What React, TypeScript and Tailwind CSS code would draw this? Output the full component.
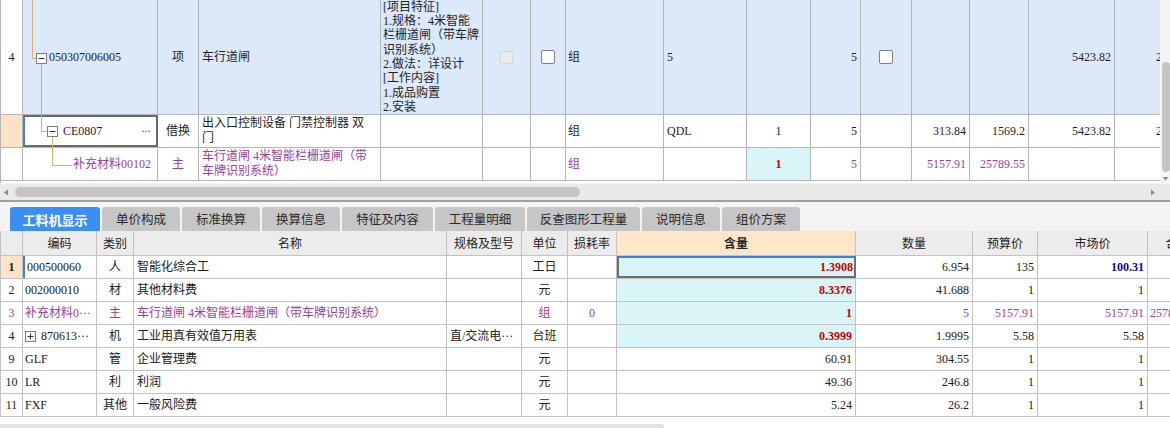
import React from "react";

type CP = { w: string; className?: string; children?: React.ReactNode };

function TC({ w, className = "", children }: CP) {
  return (
    <div
      className={`shrink-0 h-full flex items-center border-r border-[#b4b4b4] overflow-hidden whitespace-nowrap ${w} ${className}`}
    >
      {children}
    </div>
  );
}

function Check({ disabled }: { disabled?: boolean }) {
  return disabled ? (
    <div className="w-[13px] h-[13px] rounded-[2px] border border-[#d6d6d6] bg-[#ececec]" />
  ) : (
    <div className="w-[14px] h-[14px] rounded-[2px] border border-[#7f7f7f] bg-white" />
  );
}

function TopTable() {
  const blue = "bg-[#dce9fb]";
  const purple = "text-[#9c3d9c]";
  return (
    <div className="relative h-[183px] overflow-hidden bg-white border-l border-[#b4b4b4]">
      {/* row 1 */}
      <div className="flex h-[115px] border-b border-[#b4b4b4]">
        <TC w="w-[22px]" className="justify-center bg-white">4</TC>
        <TC w="w-[135px]" className={`${blue} pl-[26px]`}>050307006005</TC>
        <TC w="w-[41px]" className={`${blue} justify-center`}>项</TC>
        <TC w="w-[182px]" className={`${blue} pl-[3px]`}>车行道闸</TC>
        <TC w="w-[102px]" className={`${blue} pl-[2px]`}>
          <div className="flex flex-col leading-[14.3px]">
            <span>[项目特征]</span>
            <span>1.规格：4米智能</span>
            <span>栏栅道闸（带车牌</span>
            <span>识别系统）</span>
            <span>2.做法：详设计</span>
            <span>[工作内容]</span>
            <span>1.成品购置</span>
            <span>2.安装</span>
          </div>
        </TC>
        <TC w="w-[48px]" className={`${blue} justify-center`}><Check disabled /></TC>
        <TC w="w-[35px]" className={`${blue} justify-center`}><Check /></TC>
        <TC w="w-[98px]" className={`${blue} pl-[2px]`}>组</TC>
        <TC w="w-[83px]" className={`${blue} pl-[3px]`}>5</TC>
        <TC w="w-[64px]" className={blue}></TC>
        <TC w="w-[50px]" className={`${blue} justify-end pr-[3px]`}>5</TC>
        <TC w="w-[51px]" className={`${blue} justify-center`}><Check /></TC>
        <TC w="w-[58px]" className={blue}></TC>
        <TC w="w-[59px]" className={blue}></TC>
        <TC w="w-[86px]" className={`${blue} justify-end pr-[3px]`}>5423.82</TC>
        <TC w="w-[80px]" className={`${blue} pl-[41px]`}>27119.1</TC>
      </div>
      {/* row 2 */}
      <div className="flex h-[33px] border-b border-[#b4b4b4]">
        <TC w="w-[22px]" className="bg-[#fbe3c5]"></TC>
        <div className="shrink-0 w-[135px] h-full flex items-center border-2 border-[#6a6a6a] border-l-[#3d82e0] bg-white pl-[38px] pr-[6px] justify-between whitespace-nowrap">
          <span>CE0807</span>
          <span className="text-[#44587a] tracking-[-1px]">···</span>
        </div>
        <TC w="w-[41px]" className="justify-center">借换</TC>
        <TC w="w-[182px]" className="pl-[3px]">
          <div className="flex flex-col leading-[15px]">
            <span>出入口控制设备 门禁控制器 双</span>
            <span>门</span>
          </div>
        </TC>
        <TC w="w-[102px]"></TC>
        <TC w="w-[48px]"></TC>
        <TC w="w-[35px]"></TC>
        <TC w="w-[98px]" className="pl-[2px]">组</TC>
        <TC w="w-[83px]" className="pl-[3px]">QDL</TC>
        <TC w="w-[64px]" className="justify-center">1</TC>
        <TC w="w-[50px]" className="justify-end pr-[3px]">5</TC>
        <TC w="w-[51px]"></TC>
        <TC w="w-[58px]" className="justify-end pr-[3px]">313.84</TC>
        <TC w="w-[59px]" className="justify-end pr-[3px]">1569.2</TC>
        <TC w="w-[86px]" className="justify-end pr-[3px]">5423.82</TC>
        <TC w="w-[80px]" className="pl-[41px]">27119.1</TC>
      </div>
      {/* row 3 */}
      <div className={`flex h-[33px] border-b border-[#b4b4b4] ${purple}`}>
        <TC w="w-[22px]"></TC>
        <TC w="w-[135px]" className="pl-[50px]">补充材料00102</TC>
        <TC w="w-[41px]" className="justify-center">主</TC>
        <TC w="w-[182px]" className="pl-[3px]">
          <div className="flex flex-col leading-[15px]">
            <span>车行道闸 4米智能栏栅道闸（带</span>
            <span>车牌识别系统）</span>
          </div>
        </TC>
        <TC w="w-[102px]"></TC>
        <TC w="w-[48px]"></TC>
        <TC w="w-[35px]"></TC>
        <TC w="w-[98px]" className="pl-[2px]">组</TC>
        <TC w="w-[83px]"></TC>
        <TC w="w-[64px]" className="justify-center bg-[#d9f5f8] text-[#c40000] font-bold">1</TC>
        <TC w="w-[50px]" className="justify-end pr-[3px]">5</TC>
        <TC w="w-[51px]"></TC>
        <TC w="w-[58px]" className="justify-end pr-[3px]">5157.91</TC>
        <TC w="w-[59px]" className="justify-end pr-[3px]">25789.55</TC>
        <TC w="w-[86px]"></TC>
        <TC w="w-[80px]"></TC>
      </div>
      {/* tree lines */}
      <svg className="absolute left-0 top-0 pointer-events-none" width="160" height="181">
        <g stroke="#d8b06c" strokeWidth="1" fill="none">
          <path d="M31.5 0 V58.5 H35" />
          <path d="M40.5 63 V131.5 H46" />
          <path d="M51.5 136 V165.5 H71" />
        </g>
        <rect x="35.5" y="53.5" width="10" height="10" fill="#fff" stroke="#7c7c7c" />
        <path d="M37.5 58.5 H43.5" stroke="#333" />
        <rect x="46.5" y="126.5" width="10" height="10" fill="#fff" stroke="#7c7c7c" />
        <path d="M48.5 131.5 H54.5" stroke="#333" />
      </svg>
    </div>
  );
}

function HScroll() {
  return (
    <div className="h-[17px] bg-[#e9e9e9] flex items-center border-t border-[#f4f4f4]">
      <svg width="15" height="17" className="shrink-0">
        <path d="M8 5.5 L4 8.5 L8 11.5 Z" fill="#8a8a8a" />
      </svg>
      <div className="w-[565px] h-[10px] rounded-[5px] bg-[#c4c4c4]" />
      <div className="flex-1" />
      <svg width="12" height="17" className="shrink-0">
        <path d="M3 5.5 L7 8.5 L3 11.5 Z" fill="#8a8a8a" />
      </svg>
    </div>
  );
}

function VScroll() {
  return (
    <div className="w-[10px] h-[200px] flex flex-col bg-[#f5f5f5]">
      <div className="h-[62px]" />
      <div className="h-[110px] w-[8px] ml-[2px] rounded-[4px] bg-[#c4c4c4]" />
      <svg width="10" height="10" className="mt-[2px]">
        <path d="M2.5 3 L8.5 3 L5.5 6.5 Z" fill="#8a8a8a" />
      </svg>
      <div className="flex-1 bg-[#e9e9e9]" />
    </div>
  );
}

const tabs: { label: string; w: string }[] = [
  { label: "工料机显示", w: "w-[90px]" },
  { label: "单价构成", w: "w-[78px]" },
  { label: "标准换算", w: "w-[78px]" },
  { label: "换算信息", w: "w-[78px]" },
  { label: "特征及内容", w: "w-[91px]" },
  { label: "工程量明细", w: "w-[90px]" },
  { label: "反查图形工程量", w: "w-[113px]" },
  { label: "说明信息", w: "w-[78px]" },
  { label: "组价方案", w: "w-[78px]" },
];

function Tabs() {
  return (
    <div className="h-[31px] border-t-2 border-[#a0a0a0] bg-[#f4f4f4] flex items-end pl-[10px] gap-[2px] [font-family:'Noto_Sans_CJK_SC',sans-serif]">
      {tabs.map((t, i) => (
        <div
          key={t.label}
          className={`${t.w} h-[24px] rounded-t-[3px] flex items-center justify-center leading-none ${
            i === 0 ? "bg-[#3b8ff2] text-white font-bold text-[13px]" : "bg-[#c6c6c6] text-[#2a2a2a] text-[12.5px]"
          }`}
        >
          {t.label}
        </div>
      ))}
    </div>
  );
}

function BC({ w, className = "", children }: CP) {
  return (
    <div
      className={`shrink-0 h-full flex items-center border-r border-[#c2c2c2] overflow-hidden whitespace-nowrap ${w} ${className}`}
    >
      {children}
    </div>
  );
}

type Row = {
  no: string;
  code: React.ReactNode;
  cat: string;
  name: string;
  spec?: string;
  unit: string;
  loss?: string;
  qty: string;
  qtyHi?: boolean;
  amount: string;
  budget: string;
  market: string;
  marketBlue?: boolean;
  total?: string;
  purple?: boolean;
  cyan?: boolean;
};

const rows: Row[] = [
  { no: "1", code: "000500060", cat: "人", name: "智能化综合工", unit: "工日", qty: "1.3908", qtyHi: true, amount: "6.954", budget: "135", market: "100.31", marketBlue: true, cyan: true },
  { no: "2", code: "002000010", cat: "材", name: "其他材料费", unit: "元", qty: "8.3376", qtyHi: true, amount: "41.688", budget: "1", market: "1", cyan: true },
  { no: "3", code: "补充材料0···", cat: "主", name: "车行道闸 4米智能栏栅道闸（带车牌识别系统）", unit: "组", loss: "0", qty: "1", qtyHi: true, amount: "5", budget: "5157.91", market: "5157.91", total: "25789.55", purple: true, cyan: true },
  {
    no: "4",
    code: (
      <span className="flex items-center">
        <svg width="11" height="11" className="mr-[5px] shrink-0">
          <rect x="0.5" y="0.5" width="10" height="10" fill="#fff" stroke="#7c7c7c" />
          <path d="M2.5 5.5 H8.5 M5.5 2.5 V8.5" stroke="#333" />
        </svg>
        870613···
      </span>
    ),
    cat: "机", name: "工业用真有效值万用表", spec: "直/交流电···", unit: "台班", qty: "0.3999", qtyHi: true, amount: "1.9995", budget: "5.58", market: "5.58", cyan: true,
  },
  { no: "9", code: "GLF", cat: "管", name: "企业管理费", unit: "元", qty: "60.91", amount: "304.55", budget: "1", market: "1" },
  { no: "10", code: "LR", cat: "利", name: "利润", unit: "元", qty: "49.36", amount: "246.8", budget: "1", market: "1" },
  { no: "11", code: "FXF", cat: "其他", name: "一般风险费", unit: "元", qty: "5.24", amount: "26.2", budget: "1", market: "1" },
];

function BottomTable() {
  return (
    <div className="border-l border-[#c2c2c2] overflow-hidden">
      <div className="flex h-[25px] bg-[#ececec] border-b border-[#c2c2c2] text-[#222] [font-family:'Noto_Sans_CJK_SC',sans-serif] text-[12px]">
        <BC w="w-[22px]" />
        <BC w="w-[74px]" className="justify-center">编码</BC>
        <BC w="w-[37px]" className="justify-center">类别</BC>
        <BC w="w-[313px]" className="justify-center">名称</BC>
        <BC w="w-[75px]" className="justify-center">规格及型号</BC>
        <BC w="w-[46px]" className="justify-center">单位</BC>
        <BC w="w-[49px]" className="justify-center">损耗率</BC>
        <BC w="w-[239px]" className="justify-center bg-[#fde6c9] font-bold">含量</BC>
        <BC w="w-[117px]" className="justify-center">数量</BC>
        <BC w="w-[65px]" className="justify-center">预算价</BC>
        <BC w="w-[110px]" className="justify-center">市场价</BC>
        <BC w="w-[60px]" className="justify-center">合价</BC>
      </div>
      {rows.map((r, i) => (
        <div key={r.no} className={`flex h-[23px] border-b border-[#c2c2c2] ${r.purple ? "text-[#9c3d9c]" : "text-[#202020]"}`}>
          <BC w="w-[22px]" className={`justify-center ${i === 0 ? "bg-[#fbe3c5] font-bold" : ""}`}>{r.no}</BC>
          <BC w="w-[74px]" className={`pl-[2px] ${i === 0 ? "border-l-2 border-l-[#3d82e0]" : ""}`}>{r.code}</BC>
          <BC w="w-[37px]" className="justify-center">{r.cat}</BC>
          <BC w="w-[313px]" className="pl-[3px]">{r.name}</BC>
          <BC w="w-[75px]" className="pl-[3px]">{r.spec}</BC>
          <BC w="w-[46px]" className="justify-center">{r.unit}</BC>
          <BC w="w-[49px]" className="justify-center">{r.loss}</BC>
          {i === 0 ? (
            <div className="shrink-0 w-[239px] h-full flex items-center justify-end pr-[1px] bg-[#d9f5f8] border-2 border-[#6e6e6e] border-t-[#3b80e0] text-[#c40000] font-bold whitespace-nowrap">
              {r.qty}
            </div>
          ) : (
            <BC w="w-[239px]" className={`justify-end pr-[3px] ${r.cyan ? "bg-[#d9f5f8]" : ""} ${r.qtyHi ? "text-[#c40000] font-bold" : ""}`}>{r.qty}</BC>
          )}
          <BC w="w-[117px]" className="justify-end pr-[3px]">{r.amount}</BC>
          <BC w="w-[65px]" className="justify-end pr-[3px]">{r.budget}</BC>
          <BC w="w-[110px]" className={`justify-end pr-[3px] ${r.marketBlue ? "text-[#0a0aa8] font-bold" : ""}`}>{r.market}</BC>
          <BC w="w-[60px]" className="pl-[2px]">{r.total}</BC>
        </div>
      ))}
    </div>
  );
}

export default function App() {
  return (
    <div className="w-[1170px] h-[428px] overflow-hidden bg-white text-[12px] leading-[14px] text-[#1e1e1e] [font-family:'Liberation_Serif','Noto_Sans_CJK_SC',serif]">
      <div className="flex h-[200px]">
        <div className="w-[1160px] flex flex-col">
          <TopTable />
          <HScroll />
        </div>
        <VScroll />
      </div>
      <Tabs />
      <BottomTable />
      <div className="h-[7px]" />
      <div className="h-[4px] w-[664px] bg-[#e3e3e3] rounded-tr-[2px]" />
    </div>
  );
}
